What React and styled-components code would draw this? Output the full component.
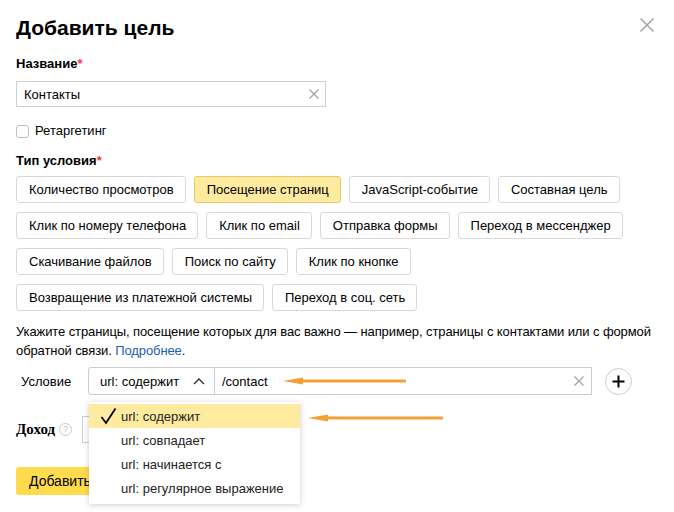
import React from 'react';
import styled, { createGlobalStyle } from 'styled-components';

const GlobalStyle = createGlobalStyle`
  html, body {
    margin: 0;
    background: #fff;
  }
  body {
    font-family: "Liberation Sans", Arial, sans-serif;
    font-size: 13px;
    color: #000;
  }
`;

const Modal = styled.div`
  position: relative;
  width: 674px;
  height: 512px;
  box-sizing: border-box;
  padding: 14px 16px 0 16px;
  overflow: hidden;
`;

const Header = styled.div`
  display: flex;
  justify-content: space-between;
  align-items: flex-start;
`;

const Title = styled.h1`
  margin: 0;
  font-size: 21px;
  line-height: 28px;
  font-weight: bold;
`;

const CloseButton = styled.div`
  width: 16px;
  height: 16px;
  margin: 3px 3px 0 0;
  color: #a6a6a6;
`;

const Label = styled.div`
  font-weight: bold;
  line-height: 16px;
  margin-top: ${(p) => p.$top || 0}px;
`;

const Required = styled.span`
  color: #f33;
`;

const TextInput = styled.div`
  display: flex;
  align-items: center;
  justify-content: space-between;
  width: ${(p) => p.$width}px;
  height: 26px;
  box-sizing: border-box;
  border: 1px solid #d0d0d0;
  padding: 0 6px 0 7px;
  margin-top: 9px;
`;

const ClearIcon = styled.div`
  width: 10px;
  height: 10px;
  color: #a0a0a0;
  display: flex;
`;

const CheckRow = styled.label`
  display: flex;
  align-items: center;
  gap: 6px;
  margin-top: 16px;
  line-height: 16px;
`;

const CheckBox = styled.span`
  width: 13px;
  height: 13px;
  box-sizing: border-box;
  border: 1px solid #bfbfbf;
  border-radius: 3px;
`;

const ButtonGrid = styled.div`
  display: flex;
  flex-direction: column;
  gap: 9px;
  margin-top: 7px;
`;

const ButtonRow = styled.div`
  display: flex;
  gap: 8px;
`;

const Chip = styled.div`
  height: 27px;
  box-sizing: border-box;
  padding: 0 11px 0 12px;
  display: flex;
  align-items: center;
  border: 1px solid ${(p) => (p.$active ? '#e6c96c' : '#d9d9d9')};
  background: ${(p) => (p.$active ? '#ffeba0' : '#fff')};
  border-radius: 3px;
  white-space: nowrap;
`;

const Hint = styled.p`
  margin: 11px 0 0 0;
  line-height: 19px;
  font-size: 13px;
  letter-spacing: -0.1px;
  color: #000;
`;

const Link = styled.a`
  color: #1a5fb4;
  text-decoration: none;
`;

const ConditionRow = styled.div`
  display: flex;
  align-items: center;
  margin-top: 7px;
  position: relative;
`;

const RowLabel = styled.div`
  width: 72px;
  padding-left: 5px;
  box-sizing: border-box;
`;

const SelectWrap = styled.div`
  position: relative;
`;

const Select = styled.div`
  display: flex;
  align-items: center;
  justify-content: space-between;
  width: 127px;
  height: 28px;
  box-sizing: border-box;
  border: 1px solid #ccc;
  border-radius: 3px 0 0 3px;
  padding: 0 9px 0 11px;
`;

const UrlInput = styled.div`
  display: flex;
  align-items: center;
  justify-content: space-between;
  width: 377px;
  height: 28px;
  box-sizing: border-box;
  border: 1px solid #ccc;
  border-left: none;
  padding: 0 7px 0 7px;
`;

const PlusButton = styled.div`
  width: 27px;
  height: 27px;
  box-sizing: border-box;
  border: 1px solid #ccc;
  border-radius: 50%;
  margin-left: 13px;
  display: flex;
  align-items: center;
  justify-content: center;
`;

const Dropdown = styled.div`
  position: absolute;
  left: 1px;
  top: 35px;
  width: 211px;
  padding: 2px 0 4px;
  background: #fff;
  box-shadow: 0 1px 6px rgba(0, 0, 0, 0.2);
  z-index: 2;
`;

const Option = styled.div`
  display: flex;
  align-items: center;
  height: 24px;
  padding-left: 32px;
  background: ${(p) => (p.$selected ? '#ffeba0' : 'transparent')};
  position: relative;
  color: #222;
`;

const Tick = styled.svg`
  position: absolute;
  left: 11px;
  top: 3px;
`;

const IncomeRow = styled.div`
  display: flex;
  align-items: center;
  margin-top: 21px;
`;

const IncomeLabel = styled.div`
  font-family: "Liberation Serif", "Times New Roman", serif;
  font-weight: bold;
  font-size: 15px;
  display: flex;
  align-items: center;
  gap: 4px;
  width: 66px;
`;

const HelpIcon = styled.span`
  width: 11px;
  height: 11px;
  border: 1px solid #c8c8c8;
  border-radius: 50%;
  color: #bbb;
  font-family: "Liberation Sans", Arial, sans-serif;
  font-weight: normal;
  font-size: 9px;
  line-height: 11px;
  text-align: center;
`;

const IncomeInput = styled.div`
  width: 120px;
  height: 27px;
  box-sizing: border-box;
  border: 1px solid #ccc;
`;

const SubmitButton = styled.div`
  display: inline-flex;
  align-items: center;
  height: 28px;
  margin-top: 24px;
  padding: 0 13px;
  background: #ffdb4d;
  border-radius: 3px;
  font-size: 14px;
`;

const Arrow = styled.svg`
  position: absolute;
  z-index: 3;
`;

const rows = [
  [['Количество просмотров'], ['Посещение страниц', true], ['JavaScript-событие'], ['Составная цель']],
  [['Клик по номеру телефона'], ['Клик по email'], ['Отправка формы'], ['Переход в мессенджер']],
  [['Скачивание файлов'], ['Поиск по сайту'], ['Клик по кнопке']],
  [['Возвращение из платежной системы'], ['Переход в соц. сеть']],
];

const options = ['url: содержит', 'url: совпадает', 'url: начинается с', 'url: регулярное выражение'];

const Cross = ({ size = 10, width = 1.2 }) => (
  <svg width={size} height={size} viewBox="0 0 10 10">
    <path d="M0.5 0.5 L9.5 9.5 M9.5 0.5 L0.5 9.5" stroke="currentColor" strokeWidth={width} fill="none" />
  </svg>
);

const OrangeArrow = ({ left, top, length }) => (
  <Arrow style={{ left, top }} width={length} height={10} viewBox={`0 0 ${length} 10`}>
    <path d={`M0 5 L20 1.5 L20 8.5 Z`} fill="#f3a036" />
    <path d={`M16 5 L${length - 1} 5`} stroke="#f3a036" strokeWidth="3" strokeLinecap="round" />
  </Arrow>
);

export default function App() {
  return (
    <Modal>
      <GlobalStyle />
      <Header>
        <Title>Добавить цель</Title>
        <CloseButton>
          <svg width="16" height="16" viewBox="0 0 16 16">
            <path d="M1.5 1.5 L14.5 14.5 M14.5 1.5 L1.5 14.5" stroke="currentColor" strokeWidth="1.6" fill="none" />
          </svg>
        </CloseButton>
      </Header>

      <Label $top={14}>
        Название<Required>*</Required>
      </Label>
      <TextInput $width={310}>
        <span>Контакты</span>
        <ClearIcon>
          <Cross />
        </ClearIcon>
      </TextInput>

      <CheckRow>
        <CheckBox />
        Ретаргетинг
      </CheckRow>

      <Label $top={14}>
        Тип условия<Required>*</Required>
      </Label>
      <ButtonGrid>
        {rows.map((row, i) => (
          <ButtonRow key={i}>
            {row.map(([text, active]) => (
              <Chip key={text} $active={active}>
                {text}
              </Chip>
            ))}
          </ButtonRow>
        ))}
      </ButtonGrid>

      <Hint>
        Укажите страницы, посещение которых для вас важно — например, страницы с контактами или с формой
        обратной связи. <Link href="#">Подробнее</Link>.
      </Hint>

      <ConditionRow>
        <RowLabel>Условие</RowLabel>
        <SelectWrap>
          <Select>
            <span>url: содержит</span>
            <svg width="12" height="8" viewBox="0 0 12 8">
              <path d="M1 7 L6 2 L11 7" stroke="#333" strokeWidth="1.4" fill="none" />
            </svg>
          </Select>
          <Dropdown>
            {options.map((o, i) => (
              <Option key={o} $selected={i === 0}>
                {i === 0 && (
                  <Tick width="17" height="18" viewBox="0 0 17 18">
                    <path d="M1.5 10 L6 16 L15.5 1.5" stroke="#000" strokeWidth="1.8" fill="none" />
                  </Tick>
                )}
                {o}
              </Option>
            ))}
          </Dropdown>
        </SelectWrap>
        <UrlInput>
          <span>/contact</span>
          <ClearIcon>
            <Cross />
          </ClearIcon>
        </UrlInput>
        <PlusButton>
          <svg width="13" height="13" viewBox="0 0 13 13">
            <path d="M6.5 0.5 V12.5 M0.5 6.5 H12.5" stroke="#000" strokeWidth="2" fill="none" />
          </svg>
        </PlusButton>
        <OrangeArrow left={267} top={9} length={123} />
        <OrangeArrow left={292} top={46} length={135} />
      </ConditionRow>

      <IncomeRow>
        <IncomeLabel>
          Доход
          <HelpIcon>?</HelpIcon>
        </IncomeLabel>
        <IncomeInput />
      </IncomeRow>

      <SubmitButton>Добавить</SubmitButton>
    </Modal>
  );
}
